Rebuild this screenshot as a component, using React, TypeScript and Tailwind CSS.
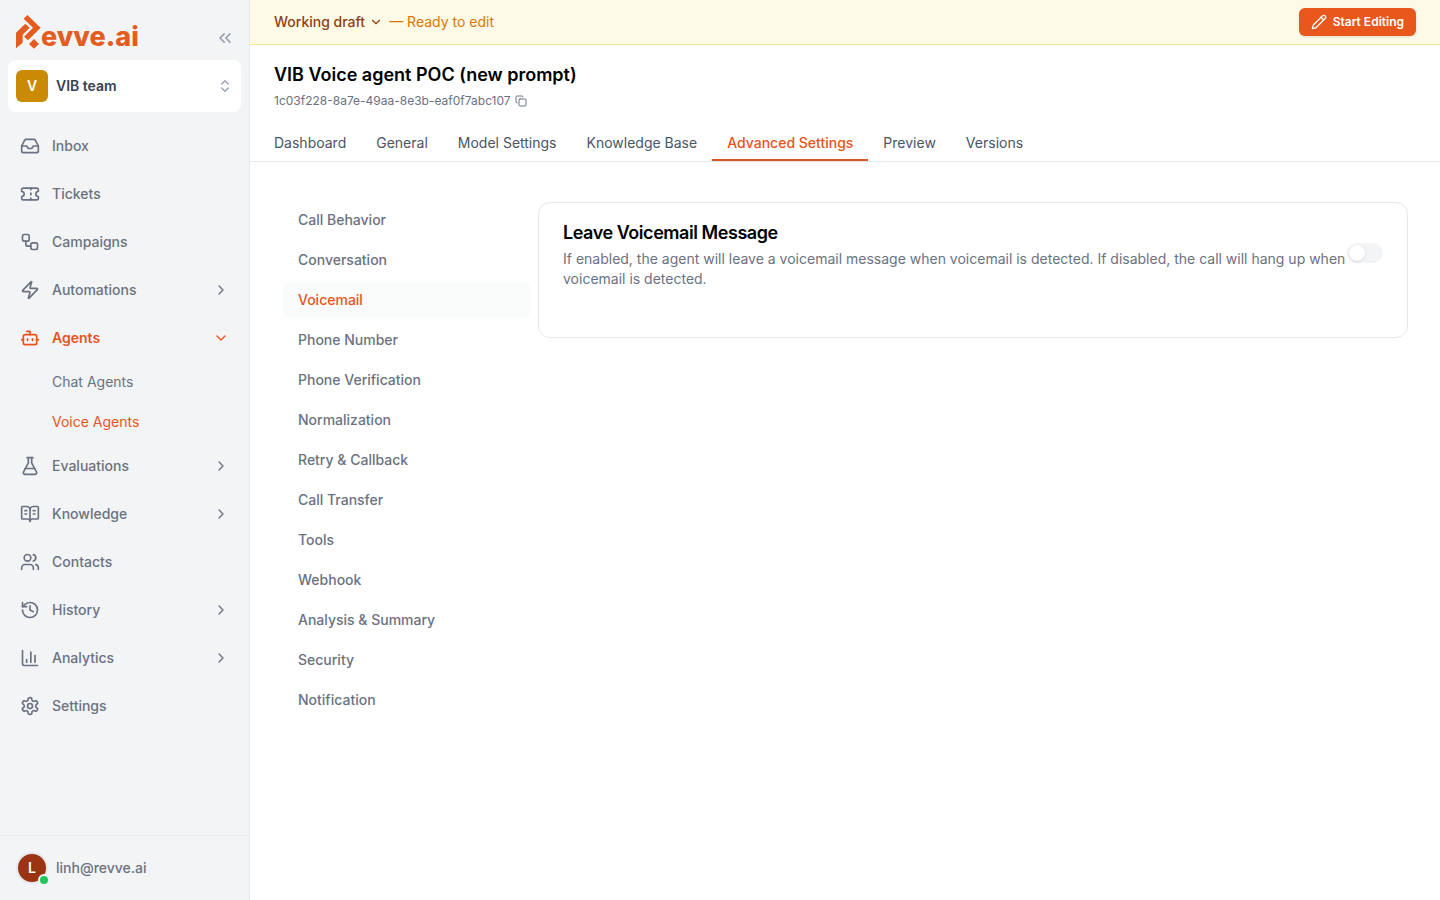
import { useState } from "react";
import type { ComponentType } from "react";
import {
  BookOpenText,
  Bot,
  ChartColumn,
  ChevronDown,
  ChevronRight,
  ChevronsLeft,
  ChevronsUpDown,
  Copy,
  FlaskConical,
  History,
  Inbox,
  Pencil,
  Ticket,
  Users,
  Workflow,
  Zap,
} from "lucide-react";

type IconType = ComponentType<{ className?: string; strokeWidth?: number }>;

function GearIcon({ className }: { className?: string }) {
  return (
    <svg className={className} viewBox="0 0 24 24" fill="none" stroke="currentColor" strokeWidth={2} strokeLinecap="round" strokeLinejoin="round" aria-hidden="true">
      <path d="M12.22 2h-.44a2 2 0 0 0-2 2v.18a2 2 0 0 1-1 1.73l-.43.25a2 2 0 0 1-2 0l-.15-.08a2 2 0 0 0-2.73.73l-.22.38a2 2 0 0 0 .73 2.73l.15.1a2 2 0 0 1 1 1.72v.51a2 2 0 0 1-1 1.74l-.15.09a2 2 0 0 0-.73 2.73l.22.38a2 2 0 0 0 2.73.73l.15-.08a2 2 0 0 1 2 0l.43.25a2 2 0 0 1 1 1.73V20a2 2 0 0 0 2 2h.44a2 2 0 0 0 2-2v-.18a2 2 0 0 1 1-1.73l.43-.25a2 2 0 0 1 2 0l.15.08a2 2 0 0 0 2.73-.73l.22-.39a2 2 0 0 0-.73-2.73l-.15-.08a2 2 0 0 1-1-1.74v-.5a2 2 0 0 1 1-1.74l.15-.09a2 2 0 0 0 .73-2.73l-.22-.38a2 2 0 0 0-2.73-.73l-.15.08a2 2 0 0 1-2 0l-.43-.25a2 2 0 0 1-1-1.73V4a2 2 0 0 0-2-2z" />
      <circle cx="12" cy="12" r="3" />
    </svg>
  );
}

type NavEntry = {
  label: string;
  icon: IconType;
  expandable?: boolean;
  children?: string[];
};

const navigation: NavEntry[] = [
  { label: "Inbox", icon: Inbox },
  { label: "Tickets", icon: Ticket },
  { label: "Campaigns", icon: Workflow },
  { label: "Automations", icon: Zap, expandable: true },
  { label: "Agents", icon: Bot, expandable: true, children: ["Chat Agents", "Voice Agents"] },
  { label: "Evaluations", icon: FlaskConical, expandable: true },
  { label: "Knowledge", icon: BookOpenText, expandable: true },
  { label: "Contacts", icon: Users },
  { label: "History", icon: History, expandable: true },
  { label: "Analytics", icon: ChartColumn, expandable: true },
  { label: "Settings", icon: GearIcon },
];

const tabs = ["Dashboard", "General", "Model Settings", "Knowledge Base", "Advanced Settings", "Preview", "Versions"];

const sections = [
  "Call Behavior",
  "Conversation",
  "Voicemail",
  "Phone Number",
  "Phone Verification",
  "Normalization",
  "Retry & Callback",
  "Call Transfer",
  "Tools",
  "Webhook",
  "Analysis & Summary",
  "Security",
  "Notification",
];

function Logo() {
  return (
    <a href="#" className="flex items-end pt-1 text-[#e55c20]">
      <svg className="h-[34px] w-[25px]" viewBox="0 0 75 102" fill="currentColor" aria-hidden="true">
        <path d="M34 0 L74 38 L36 76 L24 65 L51 38 L23 11 Z" />
        <path d="M0 100 V53 L28 26 L41 38 L20 59 V83 Z" />
        <path d="M54 72 L69 87 L54 101 L39 87 Z" />
      </svg>
      <span className="text-[27px] leading-6 font-extrabold">evve.ai</span>
    </a>
  );
}

function Sidebar() {
  return (
    <aside className="flex w-[250px] shrink-0 flex-col border-r border-gray-200 bg-gray-100">
      <div className="flex h-[60px] items-center justify-between pr-3.5 pl-4">
        <Logo />
        <button type="button" aria-label="Collapse sidebar" className="mt-4 text-gray-400">
          <ChevronsLeft className="size-5" />
        </button>
      </div>

      <button type="button" className="mx-2 flex h-[52px] items-center gap-2 rounded-lg bg-white px-2 text-left">
        <span className="flex size-8 items-center justify-center rounded-md bg-[#ca8a04] text-sm font-semibold text-white">V</span>
        <span className="flex-1 text-sm font-semibold text-gray-700">VIB team</span>
        <ChevronsUpDown className="size-4 text-gray-400" />
      </button>

      <nav aria-label="Main" className="mt-2.5 flex-1">
        <ul>
          {navigation.map(({ label, icon: Icon, expandable, children }) => {
            const Chevron = children ? ChevronDown : ChevronRight;
            return (
              <li key={label}>
                <a
                  href="#"
                  className={`flex h-12 items-center gap-3 px-5 text-sm ${children ? "font-semibold text-[#e8541c]" : "font-medium text-gray-500"}`}
                >
                  <Icon className="size-5" strokeWidth={2} />
                  <span className="flex-1">{label}</span>
                  {expandable && <Chevron className="size-4" />}
                </a>
                {children && (
                  <ul>
                    {children.map((child) => (
                      <li key={child}>
                        <a
                          href="#"
                          className={`flex h-10 items-center pl-13 text-sm ${child === "Voice Agents" ? "text-[#e8541c]" : "text-gray-500"}`}
                        >
                          {child}
                        </a>
                      </li>
                    ))}
                  </ul>
                )}
              </li>
            );
          })}
        </ul>
      </nav>

      <div className="flex h-[65px] items-center gap-2 border-t border-gray-200/60 px-4">
        <div className="relative flex size-8 items-center justify-center rounded-full border-2 border-gray-200 bg-[#9a3412] text-sm font-semibold text-white">
          L
          <span className="absolute -right-1 -bottom-1 size-3 rounded-full border-2 border-gray-100 bg-[#22c55e]" />
        </div>
        <span className="text-sm font-medium text-gray-500">linh@revve.ai</span>
      </div>
    </aside>
  );
}

function DraftBanner() {
  return (
    <div className="flex h-[45px] items-center justify-between border-b border-[#f3e8a0] bg-[#fefae8] px-6">
      <div className="flex items-center gap-1.5 text-sm">
        <button type="button" className="flex items-center gap-1 font-medium text-[#92400e]">
          Working draft
          <ChevronDown className="size-3.5" />
        </button>
        <span className="text-[#d97706]">— Ready to edit</span>
      </div>
      <button type="button" className="flex h-7 items-center gap-1.5 rounded-md bg-[#e8571b] px-3 text-xs font-semibold text-white shadow-sm">
        <Pencil className="size-4" strokeWidth={2} />
        Start Editing
      </button>
    </div>
  );
}

export default function App() {
  const [leaveMessage, setLeaveMessage] = useState(false);

  return (
    <div className="flex min-h-screen bg-white font-['Inter',sans-serif] text-gray-900">
      <Sidebar />
      <div className="flex min-w-0 flex-1 flex-col">
        <DraftBanner />

        <header className="border-b border-gray-200 pt-4">
          <div className="px-6">
            <h1 className="text-lg leading-7 font-semibold text-black">VIB Voice agent POC (new prompt)</h1>
            <div className="mt-1 flex items-center gap-1 text-xs text-gray-500">
              <span>1c03f228-8a7e-49aa-8e3b-eaf0f7abc107</span>
              <button type="button" aria-label="Copy agent ID" className="text-gray-500">
                <Copy className="size-3" />
              </button>
            </div>
          </div>
          <nav aria-label="Agent" className="mt-4 flex px-[9px]">
            {tabs.map((tab) => (
              <a
                key={tab}
                href="#"
                className={`flex h-9 items-center border-b-2 px-[15px] pt-0.5 text-sm ${
                  tab === "Advanced Settings" ? "border-[#d9572a] font-medium text-[#e8541c]" : "border-transparent text-gray-600"
                }`}
              >
                {tab}
              </a>
            ))}
          </nav>
        </header>

        <main className="flex items-start gap-2 px-8 py-10">
          <nav aria-label="Advanced settings" className="flex w-[248px] shrink-0 flex-col gap-1">
            {sections.map((section) => (
              <a
                key={section}
                href="#"
                className={`flex h-9 items-center rounded-md px-4 text-sm font-medium ${
                  section === "Voicemail" ? "bg-[#fafbfb] text-[#e8541c]" : "text-gray-500"
                }`}
              >
                {section}
              </a>
            ))}
          </nav>

          <section className="flex min-w-0 flex-1 items-start justify-between rounded-xl border border-gray-200 px-6 pt-4 pb-12">
            <div>
              <h2 id="voicemail-title" className="text-lg leading-7 font-semibold tracking-tight text-black">
                Leave Voicemail Message
              </h2>
              <p className="mt-0.5 text-sm text-gray-500">
                If enabled, the agent will leave a voicemail message when voicemail is detected. If disabled, the call will hang up when voicemail is detected.
              </p>
            </div>
            <button
              type="button"
              role="switch"
              aria-checked={leaveMessage}
              aria-labelledby="voicemail-title"
              onClick={() => setLeaveMessage(!leaveMessage)}
              className={`mt-6 flex h-5 w-9 shrink-0 items-center rounded-full border-2 border-transparent ${
                leaveMessage ? "justify-end bg-[#e8571b]" : "bg-gray-100"
              }`}
            >
              <span className="size-4 rounded-full bg-white shadow-sm" />
            </button>
          </section>
        </main>
      </div>
    </div>
  );
}
